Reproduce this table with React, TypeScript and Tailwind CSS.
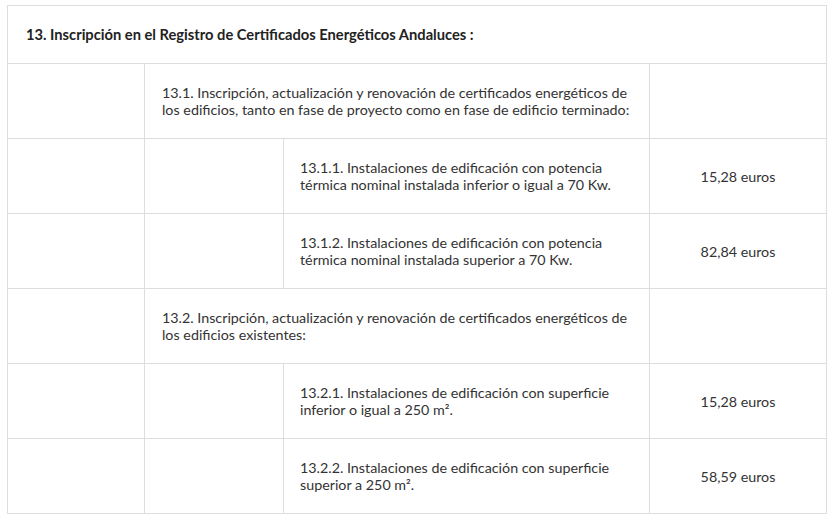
export default function App() {
  const cell = 'border border-[#dddddd] align-middle';
  return (
    <div className="min-h-screen bg-white pt-[5px] pl-[7px] font-['Lato',sans-serif] text-[14.3px] leading-[17px] text-[#333333]">
      <table className="table-fixed border-collapse w-[819px]">
        <colgroup>
          <col className="w-[137px]" />
          <col className="w-[139px]" />
          <col className="w-[366px]" />
          <col className="w-[177px]" />
        </colgroup>
        <tbody>
          <tr className="h-[58px]">
            <td colSpan={4} className={`${cell} px-[18px] font-bold text-[14.7px] text-[#222222]`}>
              13. Inscripción en el Registro de Certificados Energéticos Andaluces :
            </td>
          </tr>
          <tr className="h-[75px]">
            <td className={cell}></td>
            <td colSpan={2} className={`${cell} px-[17px] whitespace-nowrap`}>
              13.1. Inscripción, actualización y renovación de certificados energéticos de
              <br />
              los edificios, tanto en fase de proyecto como en fase de edificio terminado:
            </td>
            <td className={cell}></td>
          </tr>
          <tr className="h-[75px]">
            <td className={cell}></td>
            <td className={cell}></td>
            <td className={`${cell} px-[16px] whitespace-nowrap`}>
              13.1.1. Instalaciones de edificación con potencia
              <br />
              térmica nominal instalada inferior o igual a 70 Kw.
            </td>
            <td className={`${cell} text-center`}>15,28 euros</td>
          </tr>
          <tr className="h-[75px]">
            <td className={cell}></td>
            <td className={cell}></td>
            <td className={`${cell} px-[16px] whitespace-nowrap`}>
              13.1.2. Instalaciones de edificación con potencia
              <br />
              térmica nominal instalada superior a 70 Kw.
            </td>
            <td className={`${cell} text-center`}>82,84 euros</td>
          </tr>
          <tr className="h-[75px]">
            <td className={cell}></td>
            <td colSpan={2} className={`${cell} px-[17px] whitespace-nowrap`}>
              13.2. Inscripción, actualización y renovación de certificados energéticos de
              <br />
              los edificios existentes:
            </td>
            <td className={cell}></td>
          </tr>
          <tr className="h-[75px]">
            <td className={cell}></td>
            <td className={cell}></td>
            <td className={`${cell} px-[16px] whitespace-nowrap`}>
              13.2.1. Instalaciones de edificación con superficie
              <br />
              inferior o igual a 250 m².
            </td>
            <td className={`${cell} text-center`}>15,28 euros</td>
          </tr>
          <tr className="h-[75px]">
            <td className={cell}></td>
            <td className={cell}></td>
            <td className={`${cell} px-[16px] whitespace-nowrap`}>
              13.2.2. Instalaciones de edificación con superficie
              <br />
              superior a 250 m².
            </td>
            <td className={`${cell} text-center`}>58,59 euros</td>
          </tr>
        </tbody>
      </table>
    </div>
  );
}
